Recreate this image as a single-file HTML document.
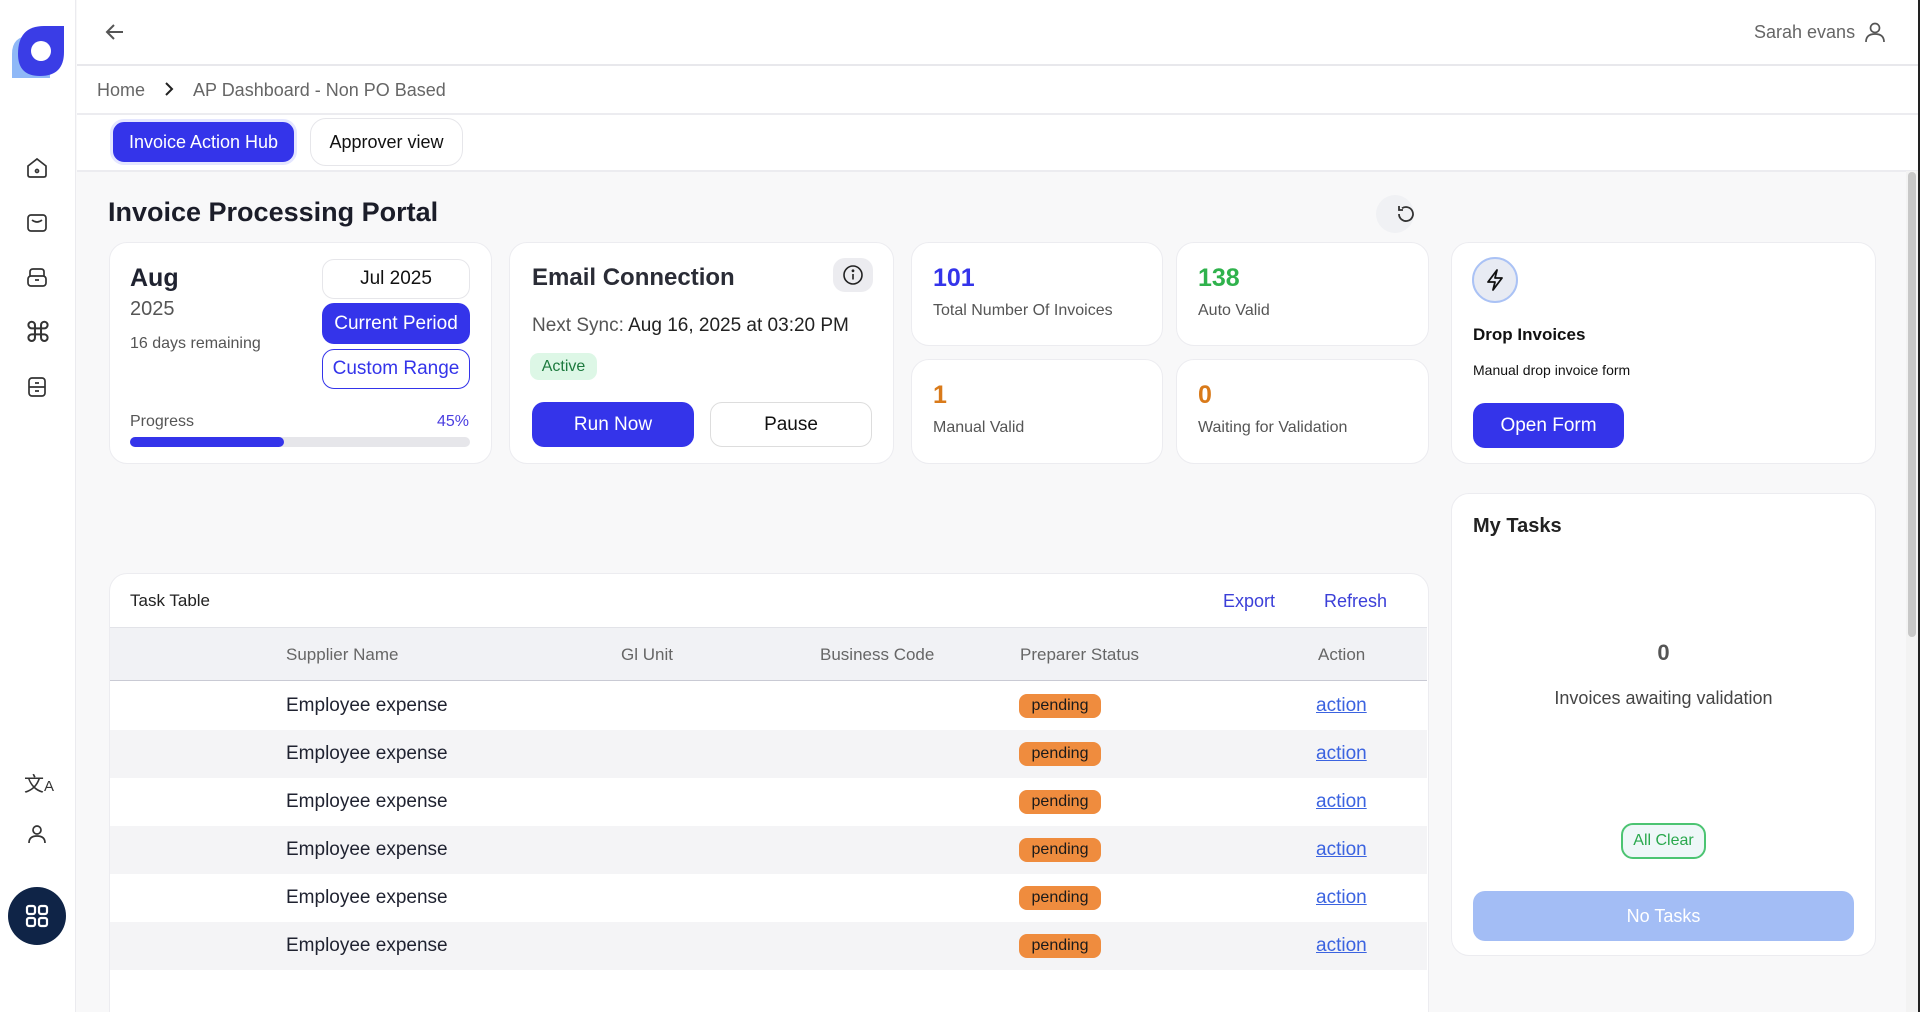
<!DOCTYPE html>
<html style="overflow:hidden;width:1920px;height:1012px"><head><meta charset="utf-8"><style>
*{box-sizing:border-box;margin:0;padding:0}
body{width:1920px;height:1012px;overflow:hidden;background:#f8f8f9;font-family:"Liberation Sans",sans-serif;color:#1f2230;position:relative}
.a{position:absolute}
.card{position:absolute;background:#fff;border:1.5px solid #ececf0;border-radius:18px}
.btn{position:absolute;display:flex;align-items:center;justify-content:center;border-radius:12px;font-size:19px}
svg{display:block}
.ic{position:absolute;left:25px}
.row{position:absolute;left:110px;width:1317px;height:48px;font-size:19px}
.row span{position:absolute;top:50%;transform:translateY(-50%)}
.pend{left:909px;width:82px;height:24px;background:#ef8c3e;border-radius:8px;font-size:16px;display:flex;align-items:center;justify-content:center;color:#1a1a1a}
.act{left:1206px;color:#3b63e0;text-decoration:underline}
</style></head><body>
<div class="a" style="left:0;top:0;width:76px;height:1012px;background:#fff;border-right:1.5px solid #ebebef"></div>
<svg class="a" style="left:10px;top:24px" width="56" height="56" viewBox="0 0 56 56"><path d="M2 54 L2 30 Q2 12 20 12 L40 12 L40 54 Z" fill="#8fb8f7"/><path d="M54 2 L54 28 Q54 52 30 52 Q8 52 8 30 Q8 2 34 2 Z" fill="#3a3de6"/><circle cx="31" cy="27" r="10" fill="#fff"/></svg>
<svg class="ic" style="top:156px" width="24" height="24" viewBox="0 0 24 24" fill="none" stroke="#333" stroke-width="1.7"><path d="M3 10 L12 3 L21 10 V19 Q21 21 19 21 H5 Q3 21 3 19 Z"/><circle cx="12" cy="15" r="1.5"/></svg>
<svg class="ic" style="top:211px" width="24" height="24" viewBox="0 0 24 24" fill="none" stroke="#333" stroke-width="1.7"><rect x="3" y="4" width="18" height="16" rx="3"/><path d="M7 9 Q12 13 17 9"/></svg>
<svg class="ic" style="top:265px" width="24" height="24" viewBox="0 0 24 24" fill="none" stroke="#333" stroke-width="1.7"><rect x="3" y="11" width="18" height="10" rx="3"/><path d="M5 11 V7 Q5 4 8 4 H16 Q19 4 19 7 V11 M10 15 H14"/></svg>
<div class="a" style="left:24px;top:316px;font-size:28px;color:#333">⌘</div>
<svg class="ic" style="top:375px" width="24" height="24" viewBox="0 0 24 24" fill="none" stroke="#333" stroke-width="1.7"><rect x="4" y="3" width="16" height="18" rx="3"/><path d="M4 12 H20 M10 8 H14 M10 16 H14"/></svg>
<div class="a" style="left:24px;top:768px;font-size:20px;color:#333">文<span style="font-size:15px">A</span></div>
<svg class="ic" style="top:822px" width="24" height="24" viewBox="0 0 24 24" fill="none" stroke="#333" stroke-width="1.7"><circle cx="12" cy="8" r="4"/><path d="M4 21 Q4 14 12 14 Q20 14 20 21"/></svg>
<div class="a" style="left:8px;top:887px;width:58px;height:58px;border-radius:50%;background:#0f2447"></div>
<svg class="a" style="left:25px;top:904px" width="24" height="24" viewBox="0 0 24 24" fill="none" stroke="#fff" stroke-width="2.2"><rect x="2" y="2" width="8" height="8" rx="2"/><rect x="14" y="2" width="8" height="8" rx="2"/><rect x="2" y="14" width="8" height="8" rx="2"/><rect x="14" y="14" width="8" height="8" rx="2"/></svg>
<div class="a" style="left:77px;top:0;width:1843px;height:170px;background:#fff"></div>
<div class="a" style="left:77px;top:64px;width:1843px;height:1.5px;background:#e8e8ec"></div>
<div class="a" style="left:77px;top:113px;width:1843px;height:1.5px;background:#ececf0"></div>
<div class="a" style="left:77px;top:170px;width:1843px;height:1.5px;background:#ececf0"></div>
<svg class="a" style="left:104px;top:21px" width="22" height="22" viewBox="0 0 22 22" fill="none" stroke="#555" stroke-width="2"><path d="M19 11 H4 M10 4 L3 11 L10 18"/></svg>
<div class="a" style="left:1754px;top:22px;font-size:18px;color:#666">Sarah evans</div>
<svg class="a" style="left:1863px;top:20px" width="24" height="24" viewBox="0 0 24 24" fill="none" stroke="#555" stroke-width="1.7"><circle cx="12" cy="8" r="4.5"/><path d="M3 22 Q3 14 12 14 Q21 14 21 22"/></svg>
<div class="a" style="left:97px;top:80px;font-size:18px;color:#666">Home</div>
<svg class="a" style="left:163px;top:81px" width="12" height="16" viewBox="0 0 12 16" fill="none" stroke="#222" stroke-width="2"><path d="M3 2 L9 8 L3 14"/></svg>
<div class="a" style="left:193px;top:80px;font-size:18px;color:#666">AP Dashboard - Non PO Based</div>
<div class="btn" style="left:110px;top:119px;width:187px;height:46px;background:#3434ea;color:#fff;border:3px solid #e4e6ff;border-radius:14px;font-size:18px">Invoice Action Hub</div>
<div class="btn" style="left:310px;top:118px;width:153px;height:48px;background:#fff;color:#111;border:1.5px solid #e6e6ea;border-radius:16px;font-size:18px">Approver view</div>
<div class="a" style="left:108px;top:197px;font-size:27px;font-weight:bold;color:#1b1d29">Invoice Processing Portal</div>
<div class="a" style="left:1376px;top:195px;width:38px;height:38px;border-radius:50%;background:#f0f1f4"></div>
<svg class="a" style="left:1395px;top:203px" width="22" height="22" viewBox="0 0 22 22" fill="none" stroke="#333" stroke-width="1.8"><path d="M4 11 A7 7 0 1 0 7 5.3"/><path d="M4 3 V7 H8"/></svg>
<div class="card" style="left:109px;top:242px;width:383px;height:222px"></div>
<div class="a" style="left:130px;top:264px;font-size:25px;font-weight:bold">Aug</div>
<div class="a" style="left:130px;top:298px;font-size:20px;color:#555">2025</div>
<div class="a" style="left:130px;top:335px;font-size:16px;color:#555">16 days remaining</div>
<div class="btn" style="left:322px;top:259px;width:148px;height:40px;background:#fff;border:1.5px solid #e6e6ea;font-size:19px;color:#111">Jul 2025</div>
<div class="btn" style="left:322px;top:303px;width:148px;height:41px;background:#3434ea;color:#fff">Current Period</div>
<div class="btn" style="left:322px;top:349px;width:148px;height:40px;background:#fff;border:1.5px solid #3434ea;color:#3434ea">Custom Range</div>
<div class="a" style="left:130px;top:413px;font-size:16px;color:#555">Progress</div>
<div class="a" style="left:437px;top:413px;font-size:16px;color:#4a3de0">45%</div>
<div class="a" style="left:130px;top:437px;width:340px;height:10px;border-radius:5px;background:#e6e6ea"></div>
<div class="a" style="left:130px;top:437px;width:154px;height:10px;border-radius:5px;background:#3434ea"></div>
<div class="card" style="left:509px;top:242px;width:385px;height:222px"></div>
<div class="a" style="left:532px;top:264px;font-size:24px;font-weight:bold;color:#2a2c36">Email Connection</div>
<div class="a" style="left:833px;top:258px;width:40px;height:34px;border-radius:12px;background:#ececf0"></div>
<svg class="a" style="left:842px;top:264px" width="22" height="22" viewBox="0 0 22 22" fill="none" stroke="#222" stroke-width="1.6"><circle cx="11" cy="11" r="9"/><path d="M11 10 V15.5"/><circle cx="11" cy="6.8" r="0.6" fill="#222"/></svg>
<div class="a" style="left:532px;top:315px;font-size:19px;color:#555">Next Sync: <span style="color:#222">Aug 16, 2025 at 03:20 PM</span></div>
<div class="a" style="left:530px;top:353px;width:67px;height:27px;border-radius:9px;background:#ddf7e6;color:#1d7a3e;font-size:16px;display:flex;align-items:center;justify-content:center">Active</div>
<div class="btn" style="left:532px;top:402px;width:162px;height:45px;background:#3434ea;color:#fff">Run Now</div>
<div class="btn" style="left:710px;top:402px;width:162px;height:45px;background:#fff;border:1.5px solid #ddd;color:#111">Pause</div>
<div class="card" style="left:911px;top:242px;width:252px;height:104px"></div>
<div class="a" style="left:933px;top:264px;font-size:25px;font-weight:bold;color:#3434ea">101</div>
<div class="a" style="left:933px;top:302px;font-size:16px;color:#555">Total Number Of Invoices</div>
<div class="card" style="left:1176px;top:242px;width:253px;height:104px"></div>
<div class="a" style="left:1198px;top:264px;font-size:25px;font-weight:bold;color:#2fb24c">138</div>
<div class="a" style="left:1198px;top:302px;font-size:16px;color:#555">Auto Valid</div>
<div class="card" style="left:911px;top:359px;width:252px;height:105px"></div>
<div class="a" style="left:933px;top:381px;font-size:25px;font-weight:bold;color:#d97a1a">1</div>
<div class="a" style="left:933px;top:419px;font-size:16px;color:#555">Manual Valid</div>
<div class="card" style="left:1176px;top:359px;width:253px;height:105px"></div>
<div class="a" style="left:1198px;top:381px;font-size:25px;font-weight:bold;color:#d97a1a">0</div>
<div class="a" style="left:1198px;top:419px;font-size:16px;color:#555">Waiting for Validation</div>
<div class="card" style="left:1451px;top:242px;width:425px;height:222px"></div>
<div class="a" style="left:1472px;top:257px;width:46px;height:46px;border-radius:50%;background:#e8ebf3;border:2px solid #aac2f5"></div>
<svg class="a" style="left:1483px;top:268px" width="24" height="24" viewBox="0 0 24 24" fill="none" stroke="#111" stroke-width="1.8" stroke-linejoin="round"><path d="M14 2 L5 14 H12 L10 22 L19 10 H12 Z"/></svg>
<div class="a" style="left:1473px;top:325px;font-size:17px;font-weight:bold;color:#111">Drop Invoices</div>
<div class="a" style="left:1473px;top:362px;font-size:14px;color:#111">Manual drop invoice form</div>
<div class="btn" style="left:1473px;top:403px;width:151px;height:45px;background:#3434ea;color:#fff">Open Form</div>
<div class="card" style="left:1451px;top:493px;width:425px;height:463px"></div>
<div class="a" style="left:1473px;top:515px;font-size:20px;font-weight:bold;color:#222">My Tasks</div>
<div class="a" style="left:1451px;top:640px;width:425px;text-align:center;font-size:22px;font-weight:bold;color:#555">0</div>
<div class="a" style="left:1451px;top:688px;width:425px;text-align:center;font-size:18px;color:#444">Invoices awaiting validation</div>
<div class="a" style="left:1621px;top:823px;width:85px;height:36px;border-radius:12px;border:2px solid #4cc472;background:#eef7f8;color:#2aa84d;font-size:16px;display:flex;align-items:center;justify-content:center">All Clear</div>
<div class="btn" style="left:1473px;top:891px;width:381px;height:50px;background:#a3bdf5;color:#fff;font-size:18px">No Tasks</div>
<div class="card" style="left:109px;top:573px;width:1320px;height:439px;border-radius:18px 18px 0 0;border-bottom:none"></div>
<div class="a" style="left:130px;top:591px;font-size:17px;color:#222">Task Table</div>
<div class="a" style="left:1223px;top:591px;font-size:18px;color:#3b3fd8">Export</div>
<div class="a" style="left:1324px;top:591px;font-size:18px;color:#3b3fd8">Refresh</div>
<div class="a" style="left:110px;top:627px;width:1317px;height:54px;background:#f1f2f5;border-top:1.5px solid #e2e3e8;border-bottom:1.5px solid #c9cad4"></div>
<div class="a" style="left:286px;top:645px;font-size:17px;color:#666">Supplier Name</div>
<div class="a" style="left:621px;top:645px;font-size:17px;color:#666">Gl Unit</div>
<div class="a" style="left:820px;top:645px;font-size:17px;color:#666">Business Code</div>
<div class="a" style="left:1020px;top:645px;font-size:17px;color:#666">Preparer Status</div>
<div class="a" style="left:1318px;top:645px;font-size:17px;color:#666">Action</div>
<div class="row" style="top:682px;background:#fff"><span style="left:176px">Employee expense</span><span class="pend">pending</span><span class="act">action</span></div>
<div class="row" style="top:730px;background:#f4f4f6"><span style="left:176px">Employee expense</span><span class="pend">pending</span><span class="act">action</span></div>
<div class="row" style="top:778px;background:#fff"><span style="left:176px">Employee expense</span><span class="pend">pending</span><span class="act">action</span></div>
<div class="row" style="top:826px;background:#f4f4f6"><span style="left:176px">Employee expense</span><span class="pend">pending</span><span class="act">action</span></div>
<div class="row" style="top:874px;background:#fff"><span style="left:176px">Employee expense</span><span class="pend">pending</span><span class="act">action</span></div>
<div class="row" style="top:922px;background:#f4f4f6"><span style="left:176px">Employee expense</span><span class="pend">pending</span><span class="act">action</span></div>
<div class="a" style="left:1906px;top:171px;width:14px;height:841px;background:#f3f3f3"></div>
<div class="a" style="left:1908px;top:172px;width:8px;height:465px;border-radius:4px;background:#c8c8c8"></div>
<div class="a" style="left:1918px;top:0;width:2px;height:1012px;background:#222"></div>
</body></html>
